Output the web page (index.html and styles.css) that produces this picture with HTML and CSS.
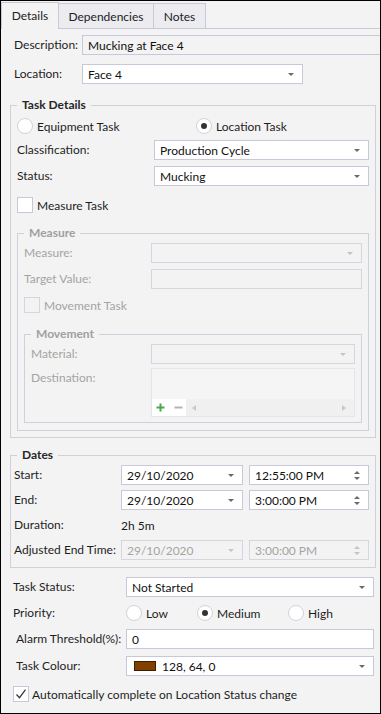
FILE: index.html
```html
<!DOCTYPE html>
<html>
<head>
<meta charset="utf-8">
<link rel="stylesheet" href="styles.css">
</head>
<body>
<div class="window">
  <div class="tabs">
    <div class="tab active">Details</div>
    <div class="tab w-dep">Dependencies</div>
    <div class="tab w-notes">Notes</div>
    <div class="tab-fill"></div>
  </div>

  <div class="row row-desc">
    <span class="lbl lw-desc">Description:</span>
    <div class="field readonly grow">Mucking at Face 4</div>
  </div>

  <div class="row row-loc">
    <span class="lbl lw-desc">Location:</span>
    <div class="combo w-loc"><span class="val">Face 4</span><span class="arrow"></span></div>
  </div>

  <fieldset class="group g-task">
    <legend>Task Details</legend>
    <div class="radio-row rr-task">
      <label class="ritem ri-equip"><span class="radio"></span><span>Equipment Task</span></label>
      <label class="ritem"><span class="radio on"></span><span>Location Task</span></label>
    </div>
    <div class="row mt6">
      <span class="lbl lw-task">Classification:</span>
      <div class="combo grow"><span class="val">Production Cycle</span><span class="arrow"></span></div>
    </div>
    <div class="row mt6">
      <span class="lbl lw-task">Status:</span>
      <div class="combo grow"><span class="val">Mucking</span><span class="arrow"></span></div>
    </div>
    <label class="check-row cr-measure"><span class="check"></span><span>Measure Task</span></label>

    <fieldset class="group g-measure disabled">
      <legend>Measure</legend>
      <div class="row mt2">
        <span class="lbl lw-measure">Measure:</span>
        <div class="combo grow"><span class="val"></span><span class="arrow"></span></div>
      </div>
      <div class="row mt6">
        <span class="lbl lw-measure">Target Value:</span>
        <div class="field grow"></div>
      </div>
      <label class="check-row cr-move"><span class="check"></span><span>Movement Task</span></label>

      <fieldset class="group g-move">
        <legend>Movement</legend>
        <div class="row mt2">
          <span class="lbl lw-move">Material:</span>
          <div class="combo grow"><span class="val"></span><span class="arrow"></span></div>
        </div>
        <div class="row-top mt4">
          <span class="lbl lw-move">Destination:</span>
          <div class="listbox grow">
            <div class="lb-body"></div>
            <div class="lb-bar">
              <div class="lb-btns">
                <svg width="9" height="9" viewBox="0 0 9 9"><path d="M4.5 0.5v8M0.5 4.5h8" stroke="#4aa84f" stroke-width="2"/></svg>
                <svg width="9" height="9" viewBox="0 0 9 9"><path d="M0.5 4.5h8" stroke="#b4b4b4" stroke-width="2"/></svg>
              </div>
              <div class="lb-scroll">
                <span class="tri-left"></span>
                <span class="tri-right"></span>
              </div>
            </div>
          </div>
        </div>
      </fieldset>
    </fieldset>
  </fieldset>

  <fieldset class="group g-dates">
    <legend>Dates</legend>
    <div class="row mt2">
      <span class="lbl lw-dates">Start:</span>
      <div class="combo w-date"><span class="val">29/10/2020</span><span class="arrow"></span></div>
      <div class="spin grow"><span class="val">12:55:00 PM</span><span class="spin-arrows"><span class="up"></span><span class="down"></span></span></div>
    </div>
    <div class="row mt5">
      <span class="lbl lw-dates">End:</span>
      <div class="combo w-date"><span class="val">29/10/2020</span><span class="arrow"></span></div>
      <div class="spin grow"><span class="val">3:00:00 PM</span><span class="spin-arrows"><span class="up"></span><span class="down"></span></span></div>
    </div>
    <div class="row mt5">
      <span class="lbl lw-dates">Duration:</span>
      <span class="plain">2h 5m</span>
    </div>
    <div class="row mt5 disabled">
      <span class="lbl lw-dates dark">Adjusted End Time:</span>
      <div class="combo w-date"><span class="val">29/10/2020</span><span class="arrow"></span></div>
      <div class="spin grow"><span class="val">3:00:00 PM</span><span class="spin-arrows"><span class="up"></span><span class="down"></span></span></div>
    </div>
  </fieldset>

  <div class="bottom">
    <div class="row">
      <span class="lbl lw-bottom">Task Status:</span>
      <div class="combo grow"><span class="val">Not Started</span><span class="arrow"></span></div>
    </div>
    <div class="radio-row rr-prio">
      <span class="lbl lw-bottom">Priority:</span>
      <label class="ritem ri-low"><span class="radio"></span><span>Low</span></label>
      <label class="ritem ri-med"><span class="radio on"></span><span>Medium</span></label>
      <label class="ritem"><span class="radio"></span><span>High</span></label>
    </div>
    <div class="row mt6">
      <span class="lbl lw-bottom indent">Alarm Threshold(%):</span>
      <div class="field grow white">0</div>
    </div>
    <div class="row mt7">
      <span class="lbl lw-bottom indent">Task Colour:</span>
      <div class="combo grow"><span class="swatch"></span><span class="val">128, 64, 0</span><span class="arrow"></span></div>
    </div>
    <label class="check-row cr-auto">
      <span class="check checked"><svg width="14" height="14" viewBox="0 0 14 14"><path d="M2.5 7.5l3 3.2 6-8" fill="none" stroke="#333" stroke-width="1.2"/></svg></span>
      <span>Automatically complete on Location Status change</span>
    </label>
  </div>
</div>
</body>
</html>
```

FILE: styles.css
```css
* { box-sizing: border-box; }
html, body { margin: 0; padding: 0; background: #ffffff; }
body {
  font-family: "Lato", "Liberation Sans", sans-serif;
  font-size: 12px;
  color: #1e1e1e;
}
.window {
  width: 381px;
  height: 714px;
  border: 1px solid #000;
  background: #f3f3f3;
  overflow: hidden;
}

/* tabs */
.tabs { display: flex; align-items: flex-end; height: 28px; }
.tab {
  height: 26px;
  display: flex; align-items: center; justify-content: center;
  background: #ebebf0;
  border-top: 1px solid #c9c9d8;
  border-right: 1px solid #c9c9d8;
  border-bottom: 1px solid #c9c9d8;
  color: #222;
  padding-top: 1px;
}
.tab.active {
  width: 58px; height: 27px;
  background: #f3f3f3;
  border-left: 1px solid #c9c9d8;
  border-bottom: none;
  padding-top: 0;
  padding-bottom: 1px;
}
.w-dep { width: 95px; }
.w-notes { width: 52px; }
.tab-fill { flex: 1; border-bottom: 1px solid #c9c9d8; }

/* rows */
.row { display: flex; align-items: center; height: 20px; }
.row-top { display: flex; align-items: flex-start; }
.grow { flex: 1; min-width: 0; }
.mt2 { margin-top: 2px; }
.mt4 { margin-top: 4px; }
.mt5 { margin-top: 5px; }
.mt6 { margin-top: 6px; }
.mt7 { margin-top: 7px; }
.lbl { flex: none; line-height: 20px; white-space: nowrap; }
.plain { color: #1a1a1a; }

.row-desc { margin: 6px 0 0 13px; }
.row-loc { margin: 9px 0 0 13px; }
.lw-desc { width: 68px; }
.lw-task { width: 137px; }
.lw-measure { width: 127px; }
.lw-move { width: 120px; }
.lw-dates { width: 107px; }
.lw-bottom { width: 113px; }
.indent { padding-left: 3px; }
.w-loc { width: 221px; }
.w-date { width: 122px; margin-right: 6px; }

/* inputs */
.field, .combo, .spin {
  height: 20px;
  border: 1px solid #c8c8d8;
  background: #fff;
  display: flex; align-items: center;
  padding: 0 5px;
  color: #111;
  white-space: nowrap;
}
.field.readonly { background: #f3f3f3; border-right: none; }
.val { flex: 1; min-width: 0; }
.arrow {
  flex: none;
  width: 0; height: 0;
  border-left: 3.5px solid transparent;
  border-right: 3.5px solid transparent;
  border-top: 3.5px solid #6a6a6a;
  margin-right: 3px;
}
.spin-arrows { display: flex; flex-direction: column; gap: 3px; margin-right: 3px; }
.spin-arrows .up, .spin-arrows .down {
  width: 0; height: 0;
  border-left: 3px solid transparent;
  border-right: 3px solid transparent;
}
.spin-arrows .up { border-bottom: 3.5px solid #6a6a6a; }
.spin-arrows .down { border-top: 3.5px solid #6a6a6a; }
.swatch {
  flex: none;
  width: 22px; height: 10px;
  background: #804000;
  border: 1px solid #3a2000;
  margin: 0 6px 0 2px;
}

/* radios & checks */
.radio-row { display: flex; align-items: center; height: 16px; }
.ritem { display: flex; align-items: center; gap: 4px; color: #1e1e1e; }
.radio {
  flex: none;
  width: 16px; height: 16px;
  border-radius: 50%;
  border: 1px solid #d2d2dc;
  background: #fff;
  display: flex; align-items: center; justify-content: center;
}
.radio.on::after {
  content: "";
  width: 6px; height: 6px;
  border-radius: 50%;
  background: #333;
}
.check-row { display: flex; align-items: center; gap: 4px; height: 16px; }
.check {
  flex: none;
  width: 16px; height: 16px;
  border: 1px solid #c8c8d8;
  background: #fff;
  display: flex; align-items: center; justify-content: center;
}

/* groups */
.group {
  margin: 0;
  border: 1px solid #d0d0dc;
  min-width: 0;
}
.group > legend {
  padding: 0 5px;
  line-height: 16px;
  font-weight: bold;
  color: #262626;
}
.g-task { margin: 13px 0 0 9px; width: 366px; padding: 0 6px 6px 6px; }
.rr-task { margin-top: 5px; }
.ri-equip { width: 179px; }
.cr-measure { margin-top: 11px; }
.g-measure { margin-top: 12px; padding: 0 6px 7px 6px; }
.cr-move { margin-top: 8px; }
.g-move { margin-top: 13px; padding: 0 6px 5px 6px; }

.g-dates { margin: 9px 0 0 9px; width: 366px; padding: 0 6px 7px 3px; }
.g-dates > legend { margin-left: 3px; }

/* disabled */
.disabled, .disabled .ritem, .disabled .check-row { color: #a4a4a4; }
.disabled > legend, .disabled legend { color: #a0a0a0; }
.disabled .field, .disabled .combo, .disabled .spin {
  background: #f3f3f3;
  border-color: #d6d6e0;
  color: #a4a4a4;
}
.disabled .arrow { border-top-color: #c4c4c4; }
.disabled .spin-arrows .up { border-bottom-color: #c4c4c4; }
.disabled .spin-arrows .down { border-top-color: #c4c4c4; }
.disabled .check { background: #f3f3f3; border-color: #d6d6e0; }
.g-dates .dark { color: #1e1e1e; }

/* listbox */
.listbox {
  height: 49px;
  border: 1px solid #e4e4ea;
  background: #f5f5f5;
  display: flex; flex-direction: column;
}
.lb-body { flex: 1; }
.lb-bar { height: 17px; display: flex; }
.lb-btns {
  width: 34px;
  background: #fff;
  display: flex; align-items: center; gap: 9px;
  padding-left: 4px;
}
.lb-scroll {
  flex: 1;
  background: #f0f0f0;
  display: flex; align-items: center; justify-content: space-between;
  padding: 0 8px 0 6px;
}
.tri-left, .tri-right {
  width: 0; height: 0;
  border-top: 3.5px solid transparent;
  border-bottom: 3.5px solid transparent;
}
.tri-left { border-right: 4px solid #c8c8c8; }
.tri-right { border-left: 4px solid #c8c8c8; }

/* bottom */
.bottom { margin: 9px 6px 0 12px; }
.rr-prio { height: 20px; margin-top: 6px; }
.ri-low { width: 71px; }
.ri-med { width: 91px; }
.cr-auto { margin-top: 10px; gap: 3px; color: #1e1e1e; }
.check.checked { width: 16px; height: 16px; }
```
